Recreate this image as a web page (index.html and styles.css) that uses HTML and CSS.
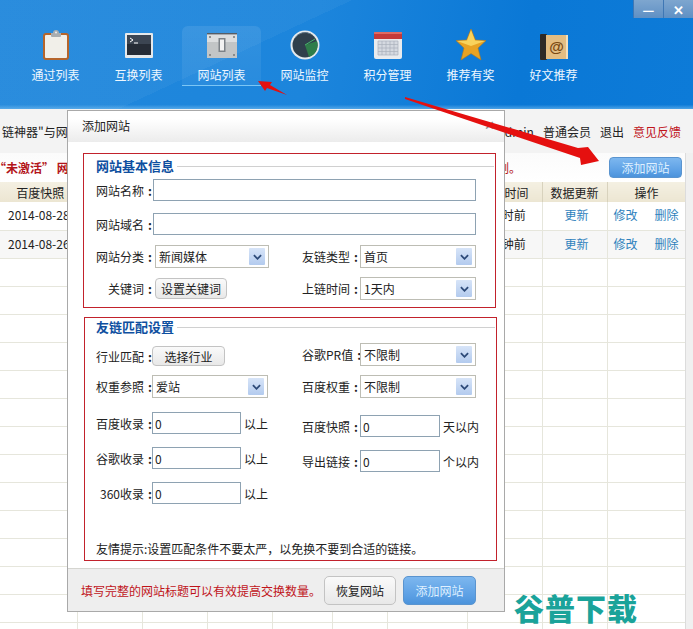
FILE: index.html
```html
<!DOCTYPE html>
<html lang="zh">
<head>
<meta charset="utf-8">
<title>网站列表</title>
<link rel="stylesheet" href="styles.css">
</head>
<body>
<div class="app">
  <header class="top">
    <div class="winbtns"><span class="winbtn">—</span><span class="winbtn">✕</span></div>
    <nav class="nav">
      <a class="nav-item">
        <svg class="ico" viewBox="0 0 32 32"><rect x="3" y="4" width="26" height="27" rx="3" fill="#b5652c"/><rect x="5" y="6" width="22" height="23" rx="1" fill="#f1efe9"/><path d="M11 6 V4 H13 Q13 1 16 1 Q19 1 19 4 H21 V7 Q21 8 20 8 H12 Q11 8 11 7 Z" fill="#a9adb0"/><circle cx="16" cy="3.6" r="1" fill="#eee"/></svg>
        <span>通过列表</span>
      </a>
      <a class="nav-item">
        <svg class="ico" viewBox="0 0 32 32"><rect x="2" y="4" width="28" height="25" rx="1" fill="#e6e9eb"/><rect x="4" y="6" width="24" height="20" fill="#262c36"/><rect x="4" y="6" width="24" height="9" fill="#3c4552"/><path d="M7 9 L10 11 L7 13" fill="none" stroke="#fff" stroke-width="1"/><path d="M11 14 H15" stroke="#fff"/></svg>
        <span>互换列表</span>
      </a>
      <a class="nav-item is-active">
        <svg class="ico" viewBox="0 0 32 32"><rect x="1" y="4" width="30" height="25" fill="#c2c5c6"/><rect x="1" y="4" width="30" height="9" fill="#dcdedf"/><rect x="1" y="4" width="30" height="1.4" fill="#555d66"/><rect x="12.5" y="9" width="7" height="14" fill="#7c8287"/><rect x="14" y="10.5" width="4" height="11" fill="#f2f2f2"/><circle cx="4" cy="8" r="1" fill="#777"/><circle cx="28" cy="8" r="1" fill="#777"/><circle cx="4" cy="26" r="1" fill="#777"/><circle cx="28" cy="26" r="1" fill="#777"/></svg>
        <span>网站列表</span>
      </a>
      <a class="nav-item">
        <svg class="ico" viewBox="0 0 32 32"><circle cx="16" cy="16" r="14.5" fill="#e4eaee"/><circle cx="16" cy="16" r="12.5" fill="#2f3f4c"/><path d="M16 16 L28 12 A12.5 12.5 0 0 1 20 28 Z" fill="#2f7d4a"/><path d="M16 16 L26 10" stroke="#49b56b"/><path d="M6 9 A12 12 0 0 1 22 5" fill="none" stroke="#5c7284"/></svg>
        <span>网站监控</span>
      </a>
      <a class="nav-item">
        <svg class="ico" viewBox="0 0 32 32"><rect x="2" y="3" width="28" height="27" rx="2" fill="#e9ebee"/><path d="M2 10 V5 Q2 3 4 3 H28 Q30 3 30 5 V10 Z" fill="#c43a3a"/><rect x="2" y="3" width="28" height="2" rx="1" fill="#e06a62"/><path d="M6 12 H26 V26 H6 Z M6 15.5 H26 M6 19 H26 M6 22.5 H26 M10 12 V26 M14 12 V26 M18 12 V26 M22 12 V26" fill="#d5d9e0" stroke="#aab0ba" stroke-width=".7"/></svg>
        <span>积分管理</span>
      </a>
      <a class="nav-item">
        <svg class="ico" viewBox="0 0 32 32"><path d="M16 0 L20.4 11 L31 11.6 L23 19 L26 31 L16 24.6 L6 31 L9 19 L1 11.6 L11.6 11 Z" fill="#e8a323" stroke="#b57a1a" stroke-width=".6"/><path d="M16 1 L20 11.5 L30 12 L16 17 L2 12 L12 11.5 Z" fill="#f8d35c"/></svg>
        <span>推荐有奖</span>
      </a>
      <a class="nav-item">
        <svg class="ico" viewBox="0 0 32 32"><rect x="2" y="5" width="7" height="26" rx="1" fill="#2e2a26"/><rect x="8" y="6" width="22" height="24" fill="#e3bd82"/><path d="M28 6 H30 V30 H28 Z" fill="#f3e0bd"/><text class="at" x="18.5" y="23" text-anchor="middle">@</text></svg>
        <span>好文推荐</span>
      </a>
    </nav>
  </header>

  <div class="toolbar">
    <span class="tool-left">链神器"与网站互换</span>
    <div class="tool-right">
      <span>admin</span><span>普通会员</span><span>退出</span><span class="feedback">意见反馈</span>
    </div>
  </div>

  <div class="notice">
    <span class="notice-text">“未激活” 网站不能参与互换，请先激活。</span>
    <span class="notice-tail">例。</span>
    <button class="btn-blue btn-add" type="button">添加网站</button>
  </div>

  <table class="grid">
    <colgroup>
      <col class="c77"><col class="c65"><col class="c65"><col class="c65"><col class="c60"><col class="c55"><col class="c80"><col class="c75"><col class="c65"><col class="c79">
    </colgroup>
    <thead>
      <tr><th class="first">百度快照</th><th>百度收录</th><th>谷歌收录</th><th>权重</th><th>PR</th><th>状态</th><th>分类</th><th>更新时间</th><th>数据更新</th><th>操作</th></tr>
    </thead>
    <tbody>
      <tr><td class="date">2014-08-28</td><td></td><td></td><td></td><td></td><td></td><td></td><td>1小时前</td><td class="link">更新</td><td><div class="ops"><a>修改</a><a>删除</a></div></td></tr>
      <tr class="alt"><td class="date">2014-08-26</td><td></td><td></td><td></td><td></td><td></td><td></td><td>2分钟前</td><td class="link">更新</td><td><div class="ops"><a>修改</a><a>删除</a></div></td></tr>
      <tr><td></td><td></td><td></td><td></td><td></td><td></td><td></td><td></td><td></td><td></td></tr>
      <tr><td></td><td></td><td></td><td></td><td></td><td></td><td></td><td></td><td></td><td></td></tr>
      <tr><td></td><td></td><td></td><td></td><td></td><td></td><td></td><td></td><td></td><td></td></tr>
      <tr><td></td><td></td><td></td><td></td><td></td><td></td><td></td><td></td><td></td><td></td></tr>
      <tr><td></td><td></td><td></td><td></td><td></td><td></td><td></td><td></td><td></td><td></td></tr>
      <tr><td></td><td></td><td></td><td></td><td></td><td></td><td></td><td></td><td></td><td></td></tr>
      <tr><td></td><td></td><td></td><td></td><td></td><td></td><td></td><td></td><td></td><td></td></tr>
      <tr><td></td><td></td><td></td><td></td><td></td><td></td><td></td><td></td><td></td><td></td></tr>
      <tr><td></td><td></td><td></td><td></td><td></td><td></td><td></td><td></td><td></td><td></td></tr>
      <tr><td></td><td></td><td></td><td></td><td></td><td></td><td></td><td></td><td></td><td></td></tr>
      <tr><td></td><td></td><td></td><td></td><td></td><td></td><td></td><td></td><td></td><td></td></tr>
      <tr><td></td><td></td><td></td><td></td><td></td><td></td><td></td><td></td><td></td><td></td></tr>
      <tr><td></td><td></td><td></td><td></td><td></td><td></td><td></td><td></td><td></td><td></td></tr>
      <tr><td></td><td></td><td></td><td></td><td></td><td></td><td></td><td></td><td></td><td></td></tr>
    </tbody>
  </table>

  <section class="modal">
    <div class="modal-title"><span class="modal-name">添加网站</span><span class="modal-close">✕</span></div>
    <div class="modal-body">
      <div class="group group-info">
        <div class="legend"><span>网站基本信息</span></div>
        <div class="row wide"><label class="lbl">网站名称</label><input class="field field-wide" type="text"></div>
        <div class="row wide gap12"><label class="lbl">网站域名</label><input class="field field-wide" type="text"></div>
        <div class="pairs">
          <div class="row"><label class="lbl">网站分类</label><div class="sel sel-a"><span>新闻媒体</span><i class="arr"><svg viewBox="0 0 10 6"><path d="M1 1 L5 5 L9 1" fill="none" stroke="#2d4a78" stroke-width="2"/></svg></i></div></div>
          <div class="row"><label class="lbl lbl-r">友链类型</label><div class="sel"><span>首页</span><i class="arr"><svg viewBox="0 0 10 6"><path d="M1 1 L5 5 L9 1" fill="none" stroke="#2d4a78" stroke-width="2"/></svg></i></div></div>
          <div class="row"><label class="lbl">关键词</label><button class="btn-grey btn-key" type="button">设置关键词</button></div>
          <div class="row"><label class="lbl lbl-r">上链时间</label><div class="sel"><span>1天内</span><i class="arr"><svg viewBox="0 0 10 6"><path d="M1 1 L5 5 L9 1" fill="none" stroke="#2d4a78" stroke-width="2"/></svg></i></div></div>
        </div>
      </div>

      <div class="group group-match">
        <div class="legend"><span>友链匹配设置</span></div>
        <div class="cols">
          <div class="col col-left">
            <div class="row h19"><label class="lbl">行业匹配</label><button class="btn-grey btn-ind" type="button">选择行业</button></div>
            <div class="row h23 m9"><label class="lbl">权重参照</label><div class="sel sel-b"><span>爱站</span><i class="arr"><svg viewBox="0 0 10 6"><path d="M1 1 L5 5 L9 1" fill="none" stroke="#2d4a78" stroke-width="2"/></svg></i></div></div>
            <div class="row h22 m14"><label class="lbl">百度收录</label><input class="field field-s" type="text" value="0"><span class="unit">以上</span></div>
            <div class="row h22 m13"><label class="lbl">谷歌收录</label><input class="field field-s" type="text" value="0"><span class="unit">以上</span></div>
            <div class="row h22 m13"><label class="lbl">360收录</label><input class="field field-s" type="text" value="0"><span class="unit">以上</span></div>
          </div>
          <div class="col col-right">
            <div class="row h23"><label class="lbl lbl-r">谷歌PR值</label><div class="sel"><span>不限制</span><i class="arr"><svg viewBox="0 0 10 6"><path d="M1 1 L5 5 L9 1" fill="none" stroke="#2d4a78" stroke-width="2"/></svg></i></div></div>
            <div class="row h23 m9"><label class="lbl lbl-r">百度权重</label><div class="sel"><span>不限制</span><i class="arr"><svg viewBox="0 0 10 6"><path d="M1 1 L5 5 L9 1" fill="none" stroke="#2d4a78" stroke-width="2"/></svg></i></div></div>
            <div class="row h22 m17"><label class="lbl lbl-r">百度快照</label><input class="field field-m" type="text" value="0"><span class="unit">天以内</span></div>
            <div class="row h22 m13"><label class="lbl lbl-r">导出链接</label><input class="field field-m" type="text" value="0"><span class="unit">个以内</span></div>
          </div>
        </div>
        <p class="tip">友情提示:设置匹配条件不要太严，以免换不要到合适的链接。</p>
      </div>
    </div>
    <div class="modal-foot">
      <span class="foot-text">填写完整的网站标题可以有效提高交换数量。</span>
      <button class="btn-grey btn-foot btn-restore" type="button">恢复网站</button>
      <button class="btn-blue btn-foot" type="button">添加网站</button>
    </div>
  </section>

  <div class="watermark">谷普下载</div>

  <svg class="arrows" viewBox="0 0 693 629">
    <polygon points="258,81 272,82 270,85 287,95 267,88 265,91" fill="#e5100f"/>
    <polygon points="405,97 578,148 588,147 599,161 581,165 580,158 405,99" fill="#e5100f"/>
  </svg>
</div>
</body>
</html>
```

FILE: styles.css
```css
* { box-sizing: border-box; }
html, body { margin: 0; padding: 0; }
body {
  font-family: "Noto Sans CJK SC", "Liberation Sans", sans-serif;
  font-size: 12px;
  color: #222;
  background: #fff;
}
.app { position: relative; width: 693px; height: 629px; overflow: hidden; }

/* header */
.top {
  position: relative;
  height: 109px;
  padding: 26px 0 0 16px;
  background:
    linear-gradient(180deg, rgba(255,255,255,0) 96%, rgba(120,190,240,.6) 100%),
    linear-gradient(155deg, rgba(255,255,255,.04) 0 38%, rgba(255,255,255,0) 38%),
    linear-gradient(100deg, #2288dc 0%, #1c85dc 45%, #0a78d6 75%, #0d7bd8 100%);
}
.winbtns { position: absolute; top: 0; right: 0; display: flex; width: 60px; height: 18px; }
.winbtn {
  flex: 1;
  display: flex;
  align-items: center;
  justify-content: center;
  background: linear-gradient(#7ea6cf, #5f90c4);
  color: #fff;
  font-size: 13px;
  font-weight: 700;
  line-height: 1;
  border-left: 1px solid #3f77b4;
}
.nav { display: flex; gap: 4px; }
.nav-item {
  width: 79px;
  height: 60px;
  padding-top: 3px;
  display: flex;
  flex-direction: column;
  align-items: center;
  color: #eef7ff;
  font-size: 12px;
  line-height: 16px;
}
.nav-item.is-active {
  background: linear-gradient(rgba(255,255,255,.09), rgba(255,255,255,.05));
  border-radius: 6px 6px 0 0;
  border-bottom: 1px solid #7cc6f5;
}
.ico { display: block; width: 32px; height: 32px; margin-bottom: 6px; }
.at { font-family: "Liberation Sans", sans-serif; font-size: 15px; font-weight: 700; fill: #7a4a14; }

/* toolbar */
.toolbar {
  height: 44px;
  display: flex;
  justify-content: space-between;
  align-items: center;
  background: #f3f3f3;
  padding: 1px 12px 0 0;
  white-space: nowrap;
}
.tool-left { margin-left: 2px; }
.tool-right { display: flex; gap: 9px; }
.feedback { color: #c0141a; }

/* notice */
.notice {
  height: 29px;
  display: flex;
  align-items: center;
  padding-right: 11px;
  background: linear-gradient(#fbfbfb, #fff);
}
.notice-text { color: #b3141a; font-weight: 700; white-space: nowrap; margin-left: -6px; }
.notice-tail { color: #b3141a; margin-left: auto; margin-right: 88px; }
.btn-blue {
  font: inherit;
  color: #dff0ff;
  background: linear-gradient(#7db7ef, #5b9fe4 70%, #4c93db);
  border: 1px solid #5a94cf;
  border-radius: 4px;
}
.btn-add { width: 73px; height: 21px; padding: 0; }

/* table */
.grid { width: 686px; table-layout: fixed; border-collapse: collapse; }
.c77 { width: 77px; } .c65 { width: 65px; } .c60 { width: 60px; } .c55 { width: 55px; }
.c80 { width: 80px; } .c75 { width: 75px; } .c79 { width: 79px; }
.grid th {
  height: 20px;
  padding: 0;
  font-weight: 400;
  background: linear-gradient(#f4f0e2, #ece6d2);
  border-right: 1px solid #d8d2bd;
}
.grid th.first { padding-left: 4px; }
.grid td {
  height: 28px;
  padding: 0 0 2px;
  text-align: center;
  border-bottom: 1px solid #e6e6dc;
  border-right: 1px solid #e6e6dc;
  white-space: nowrap;
}
.grid tr.alt td { background: #f7f7f7; }
.grid td.date { text-align: left; padding-left: 8px; }
.grid td.link { color: #2f82bd; padding-left: 4px; }
.ops { display: flex; gap: 17px; padding-left: 6px; color: #2f82bd; }
.app::after {
  content: "";
  position: absolute;
  top: 153px;
  right: 0;
  bottom: 0;
  width: 7px;
  background: #f0f0f0;
  border-left: 1px solid #dcdcdc;
}

/* modal */
.modal {
  position: absolute;
  left: 67px;
  top: 110px;
  width: 438px;
  height: 502px;
  z-index: 2;
  background: #fff;
  border: 1px solid #a9a9a9;
  display: flex;
  flex-direction: column;
}
.modal-title {
  height: 31px;
  flex: none;
  padding: 0 14px;
  display: flex;
  justify-content: space-between;
  align-items: center;
  background: linear-gradient(#fff 25%, #ececec);
}
.modal-name { margin-bottom: 2px; }
.modal-close { color: #8a8a8a; font-size: 13px; margin: 0 -5px 5px 0; }
.modal-body { flex: 1; padding: 11px 7px 0 15px; display: flex; flex-direction: column; gap: 9px; }
.group { flex: none; min-width: 0; border: 1px solid #c2222c; }
.group-info { width: 413px; height: 155px; padding: 4px 12px 0; }
.group-match { height: 244px; padding: 1px 12px 0 11px; margin-left: 1px; }
.legend {
  height: 16px;
  margin-right: -11px;
  display: flex;
  align-items: center;
  gap: 3px;
  color: #0e4fa0;
  font-size: 13px;
  font-weight: 700;
  line-height: 16px;
}
.legend::after { content: ""; flex: 1; height: 1px; background: #d0d0d0; }
.row { display: flex; align-items: center; white-space: nowrap; }
.wide { height: 22px; margin-top: 5px; }
.wide.gap12 { margin-top: 12px; }
.lbl { width: 56px; flex: none; text-align: right; }
.lbl::after { content: ":"; display: inline-block; width: 8px; text-align: right; font-weight: 700; }
.lbl-r { margin-right: 2px; }
.field {
  font: inherit;
  height: 22px;
  padding: 0 2px;
  margin: 0;
  color: #222;
  border: 1px solid #8ea2b2;
  background: #fff;
  outline: none;
}
.field-wide { width: 323px; margin-left: 1px; }
.field-s { width: 89px; }
.field-m { width: 80px; }
.unit { margin-left: 3px; }
.sel {
  width: 116px;
  height: 23px;
  flex: none;
  display: flex;
  align-items: center;
  justify-content: space-between;
  padding: 0 3px;
  border: 1px solid #bdbdb4;
  background: #fff;
}
.sel-a { width: 114px; margin-left: 3px; }
.arr {
  width: 16px;
  height: 17px;
  display: flex;
  align-items: center;
  justify-content: center;
  background: linear-gradient(#d7e4f8, #b3cbee);
  border-radius: 1px;
}
.arr svg { width: 9px; height: 6px; display: block; }
.pairs {
  display: grid;
  grid-template-columns: 206px 174px;
  grid-template-rows: 23px 23px;
  row-gap: 9px;
  margin-top: 10px;
}
.btn-grey {
  font: inherit;
  color: #222;
  padding: 0;
  border: 1px solid #c3c3c3;
  border-radius: 4px;
  background: linear-gradient(#fafafa, #e8e8e8);
}
.btn-key { width: 72px; height: 21px; margin-left: 3px; }
.btn-ind { width: 73px; height: 20px; }
.cols { display: flex; margin-top: 8px; }
.col-left { width: 206px; padding-top: 3px; }
.col-right { width: 174px; }
.h19 { height: 20px; }
.h22 { height: 22px; }
.h23 { height: 23px; }
.m9 { margin-top: 9px; }
.m13 { margin-top: 13px; }
.m14 { margin-top: 14px; }
.m17 { margin-top: 17px; }
.tip { margin: 36px 0 0; white-space: nowrap; }
.modal-foot {
  height: 43px;
  flex: none;
  padding: 0 28px 0 13px;
  display: flex;
  align-items: center;
  background: #eee;
  border-top: 1px solid #d5d5d0;
}
.foot-text { color: #c0141a; flex: 1; min-width: 0; white-space: nowrap; }
.btn-foot { flex: none; width: 73px; height: 29px; border-radius: 5px; }
.btn-restore { width: 72px; margin-right: 7px; }

/* overlays */
.watermark {
  position: absolute;
  left: 514px;
  top: 590px;
  z-index: 3;
  color: #1aa39a;
  font-size: 30px;
  line-height: 34px;
  font-weight: 900;
  letter-spacing: 1px;
  white-space: nowrap;
}
.arrows { position: absolute; left: 0; top: 0; width: 693px; height: 629px; z-index: 4; pointer-events: none; }
```
